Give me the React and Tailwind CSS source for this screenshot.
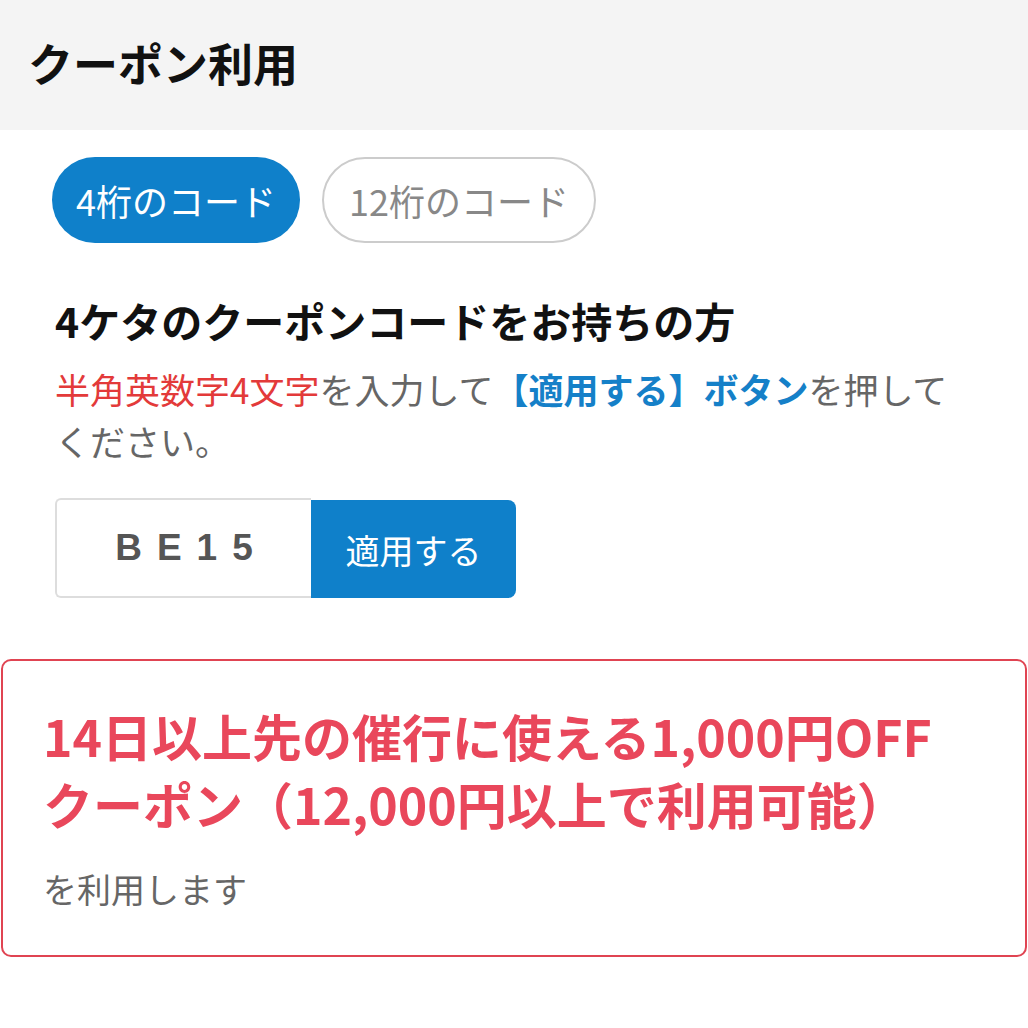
export default function App() {
  return (
    <div
      className="w-[1028px] h-[1028px] bg-white overflow-hidden"
      style={{ fontFamily: '"Noto Sans CJK JP", "Noto Sans", sans-serif' }}
    >
      {/* Header */}
      <div className="h-[130px] bg-[#f4f4f4] flex items-center pl-[28px]">
        <h1 className="text-[45px] font-bold text-[#111] -mt-[4px]">クーポン利用</h1>
      </div>

      {/* Tabs */}
      <div className="flex gap-[22px] pl-[52px] pt-[27px]">
        <button className="h-[86px] w-[248px] rounded-full bg-[#0f80ca] text-white text-[36px] flex items-center justify-center">
          4桁のコード
        </button>
        <button className="h-[86px] w-[274px] rounded-full border-2 border-[#cccccc] text-[#888] text-[36px] flex items-center justify-center">
          12桁のコード
        </button>
      </div>

      {/* Description */}
      <div className="pl-[55px] pt-[52px]">
        <h2 className="text-[41px] font-bold text-[#111] leading-[50px]">
          4ケタのクーポンコードをお持ちの方
        </h2>
        <div className="mt-[18px] text-[35px] leading-[52px] text-[#666]">
          <div className="whitespace-nowrap">
            <span className="text-[#e33a3a]">半角英数字4文字</span>
            <span>を入力して</span>
            <span className="text-[#1580c8] font-bold">【適用する】ボタン</span>
            <span>を押して</span>
          </div>
          <div>ください。</div>
        </div>

        {/* Input row */}
        <div className="flex items-end mt-[31px]">
          <div className="w-[256px] h-[100px] border-2 border-[#dddddd] border-r-0 rounded-l-[6px] flex items-center justify-center">
            <span
              className="text-[37px] font-bold text-[#555] tracking-[15px] pl-[15px]"
              style={{ fontFamily: '"Liberation Sans", Arial, sans-serif' }}
            >
              BE15
            </span>
          </div>
          <button className="w-[205px] h-[98px] bg-[#0f80ca] text-white text-[34px] rounded-r-[8px] flex items-center justify-center">
            適用する
          </button>
        </div>
      </div>

      {/* Selected coupon */}
      <div className="mt-[61px] mx-[1px] h-[298px] border-2 border-[#e04452] rounded-[10px] pl-[40px] pt-[40px]">
        <div className="text-[50px] font-bold text-[#e9475b] leading-[68px]">
          <span className="block">14日以上先の催行に使える1,000円OFF</span>
          <span className="block">クーポン（12,000円以上で利用可能）</span>
        </div>
        <p className="mt-[26px] text-[34px] text-[#666]">を利用します</p>
      </div>
    </div>
  );
}
